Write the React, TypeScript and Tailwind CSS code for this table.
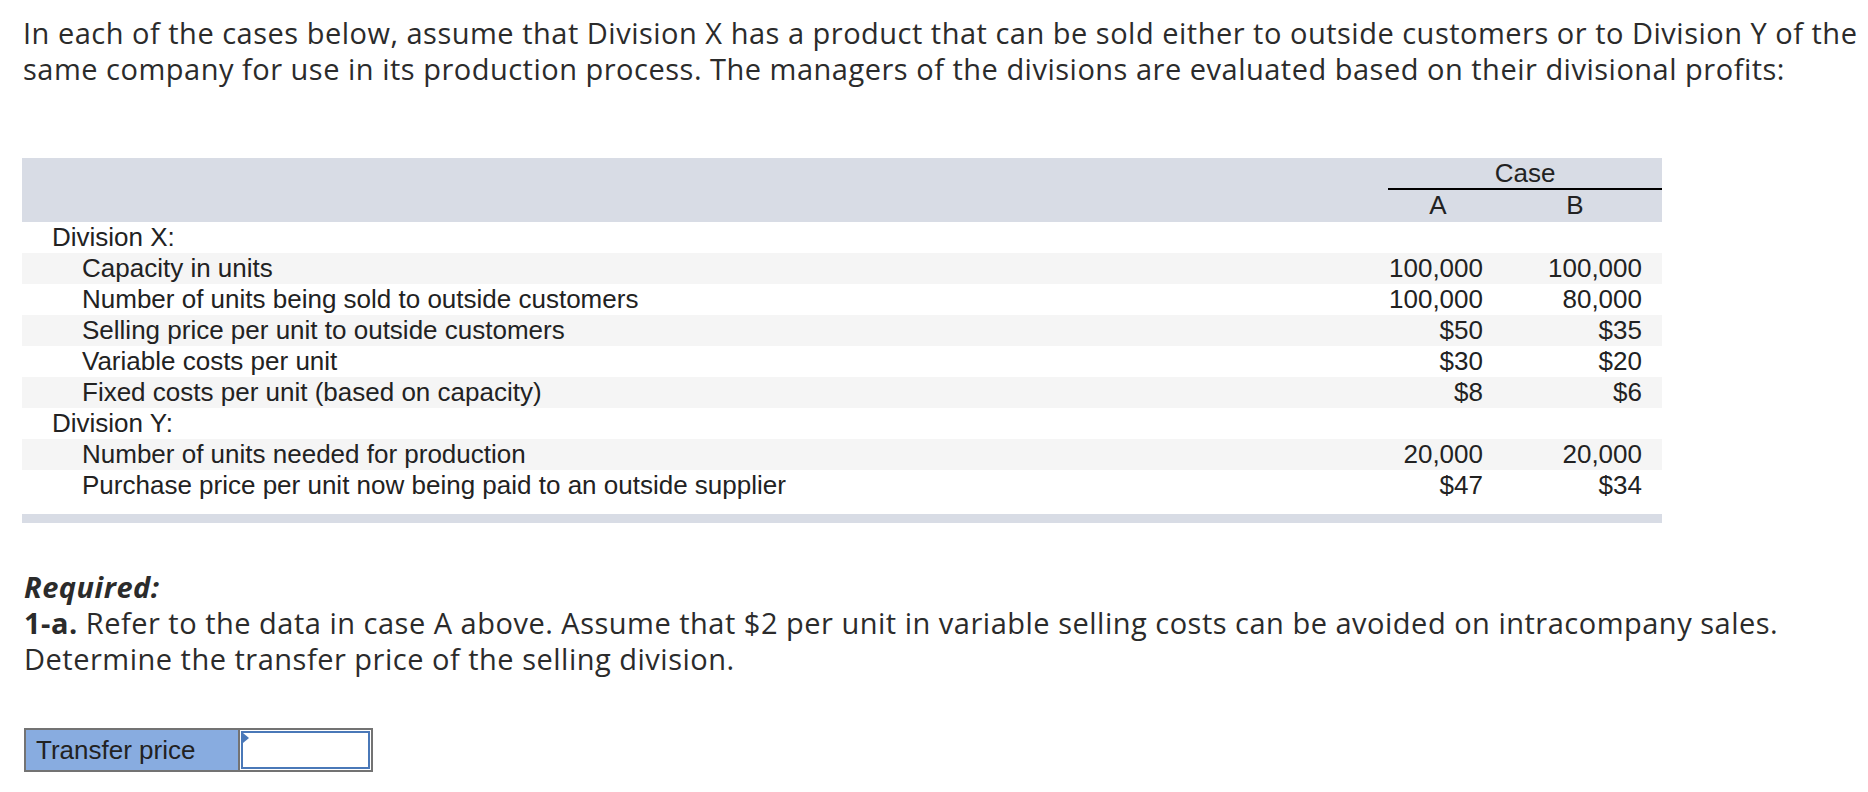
import React from "react";

type Row = {
  label: string;
  a?: string;
  b?: string;
  level: 0 | 1;
  shaded: boolean;
};

const rows: Row[] = [
  { label: "Division X:", level: 0, shaded: false },
  { label: "Capacity in units", a: "100,000", b: "100,000", level: 1, shaded: true },
  { label: "Number of units being sold to outside customers", a: "100,000", b: "80,000", level: 1, shaded: false },
  { label: "Selling price per unit to outside customers", a: "$50", b: "$35", level: 1, shaded: true },
  { label: "Variable costs per unit", a: "$30", b: "$20", level: 1, shaded: false },
  { label: "Fixed costs per unit (based on capacity)", a: "$8", b: "$6", level: 1, shaded: true },
  { label: "Division Y:", level: 0, shaded: false },
  { label: "Number of units needed for production", a: "20,000", b: "20,000", level: 1, shaded: true },
  { label: "Purchase price per unit now being paid to an outside supplier", a: "$47", b: "$34", level: 1, shaded: false },
];

const prose = "font-['Open_Sans','Lato',sans-serif] text-[29px] leading-[36px] tracking-[0.5px] text-[#2b2b2b]";
const cell = "font-['Liberation_Sans',Arial,sans-serif] text-[26px] leading-[31px] text-[#222]";

export default function App() {
  return (
    <div className="min-h-screen bg-white pt-[15px]">
      {/* intro */}
      <p className={`${prose} pl-[23px] whitespace-nowrap`}>
        In each of the cases below, assume that Division X has a product that can be sold either to outside customers or to Division Y of the
        <br />
        same company for use in its production process. The managers of the divisions are evaluated based on their divisional profits:
      </p>

      {/* data table */}
      <div className={`${cell} ml-[22px] mt-[71px] w-[1640px]`}>
        <div className="grid grid-cols-[1366px_100px_174px] bg-[#d8dce5]">
          <div className="h-[32px]" />
          <div className="col-span-2 h-[32px] border-b-2 border-black text-center">Case</div>
          <div className="h-[32px]" />
          <div className="h-[32px] text-center">A</div>
          <div className="h-[32px] text-center">B</div>
        </div>

        {rows.map((r, i) => (
          <div
            key={i}
            className={`grid grid-cols-[1366px_100px_174px] h-[31px] ${r.shaded ? "bg-[#f5f5f5]" : "bg-white"}`}
          >
            <div className={r.level === 0 ? "pl-[30px]" : "pl-[60px]"}>{r.label}</div>
            <div className="pr-[5px] text-right">{r.a}</div>
            <div className="pr-[20px] text-right">{r.b}</div>
          </div>
        ))}

        <div className="mt-[13px] h-[9px] bg-[#d8dce5]" />
      </div>

      {/* requirement */}
      <div className={`${prose} pl-[24px] mt-[46px] whitespace-nowrap`}>
        <div className="font-bold italic">Required:</div>
        <div>
          <span className="font-bold">1-a.</span> Refer to the data in case A above. Assume that $2 per unit in variable selling costs can be avoided on intracompany sales.
        </div>
        <div>Determine the transfer price of the selling division.</div>
      </div>

      {/* answer box */}
      <div className="ml-[24px] mt-[51px] flex h-[44px] w-[349px] border-2 border-[#737373]">
        <div className={`${cell} flex w-[212px] items-center bg-[#88ace0] pl-[10px] text-[24px]`}>
          Transfer price
        </div>
        <div className="relative flex-1 border-l-2 border-[#737373] bg-white">
          <div className="absolute inset-[1px] border-2 border-[#4a78b8]" />
          <div className="absolute left-[3px] top-[3px] h-0 w-0 border-y-[5px] border-l-[6px] border-y-transparent border-l-[#4a78b8]" />
          <input className="h-full w-full bg-transparent px-2 outline-none" aria-label="Transfer price" />
        </div>
      </div>
    </div>
  );
}
